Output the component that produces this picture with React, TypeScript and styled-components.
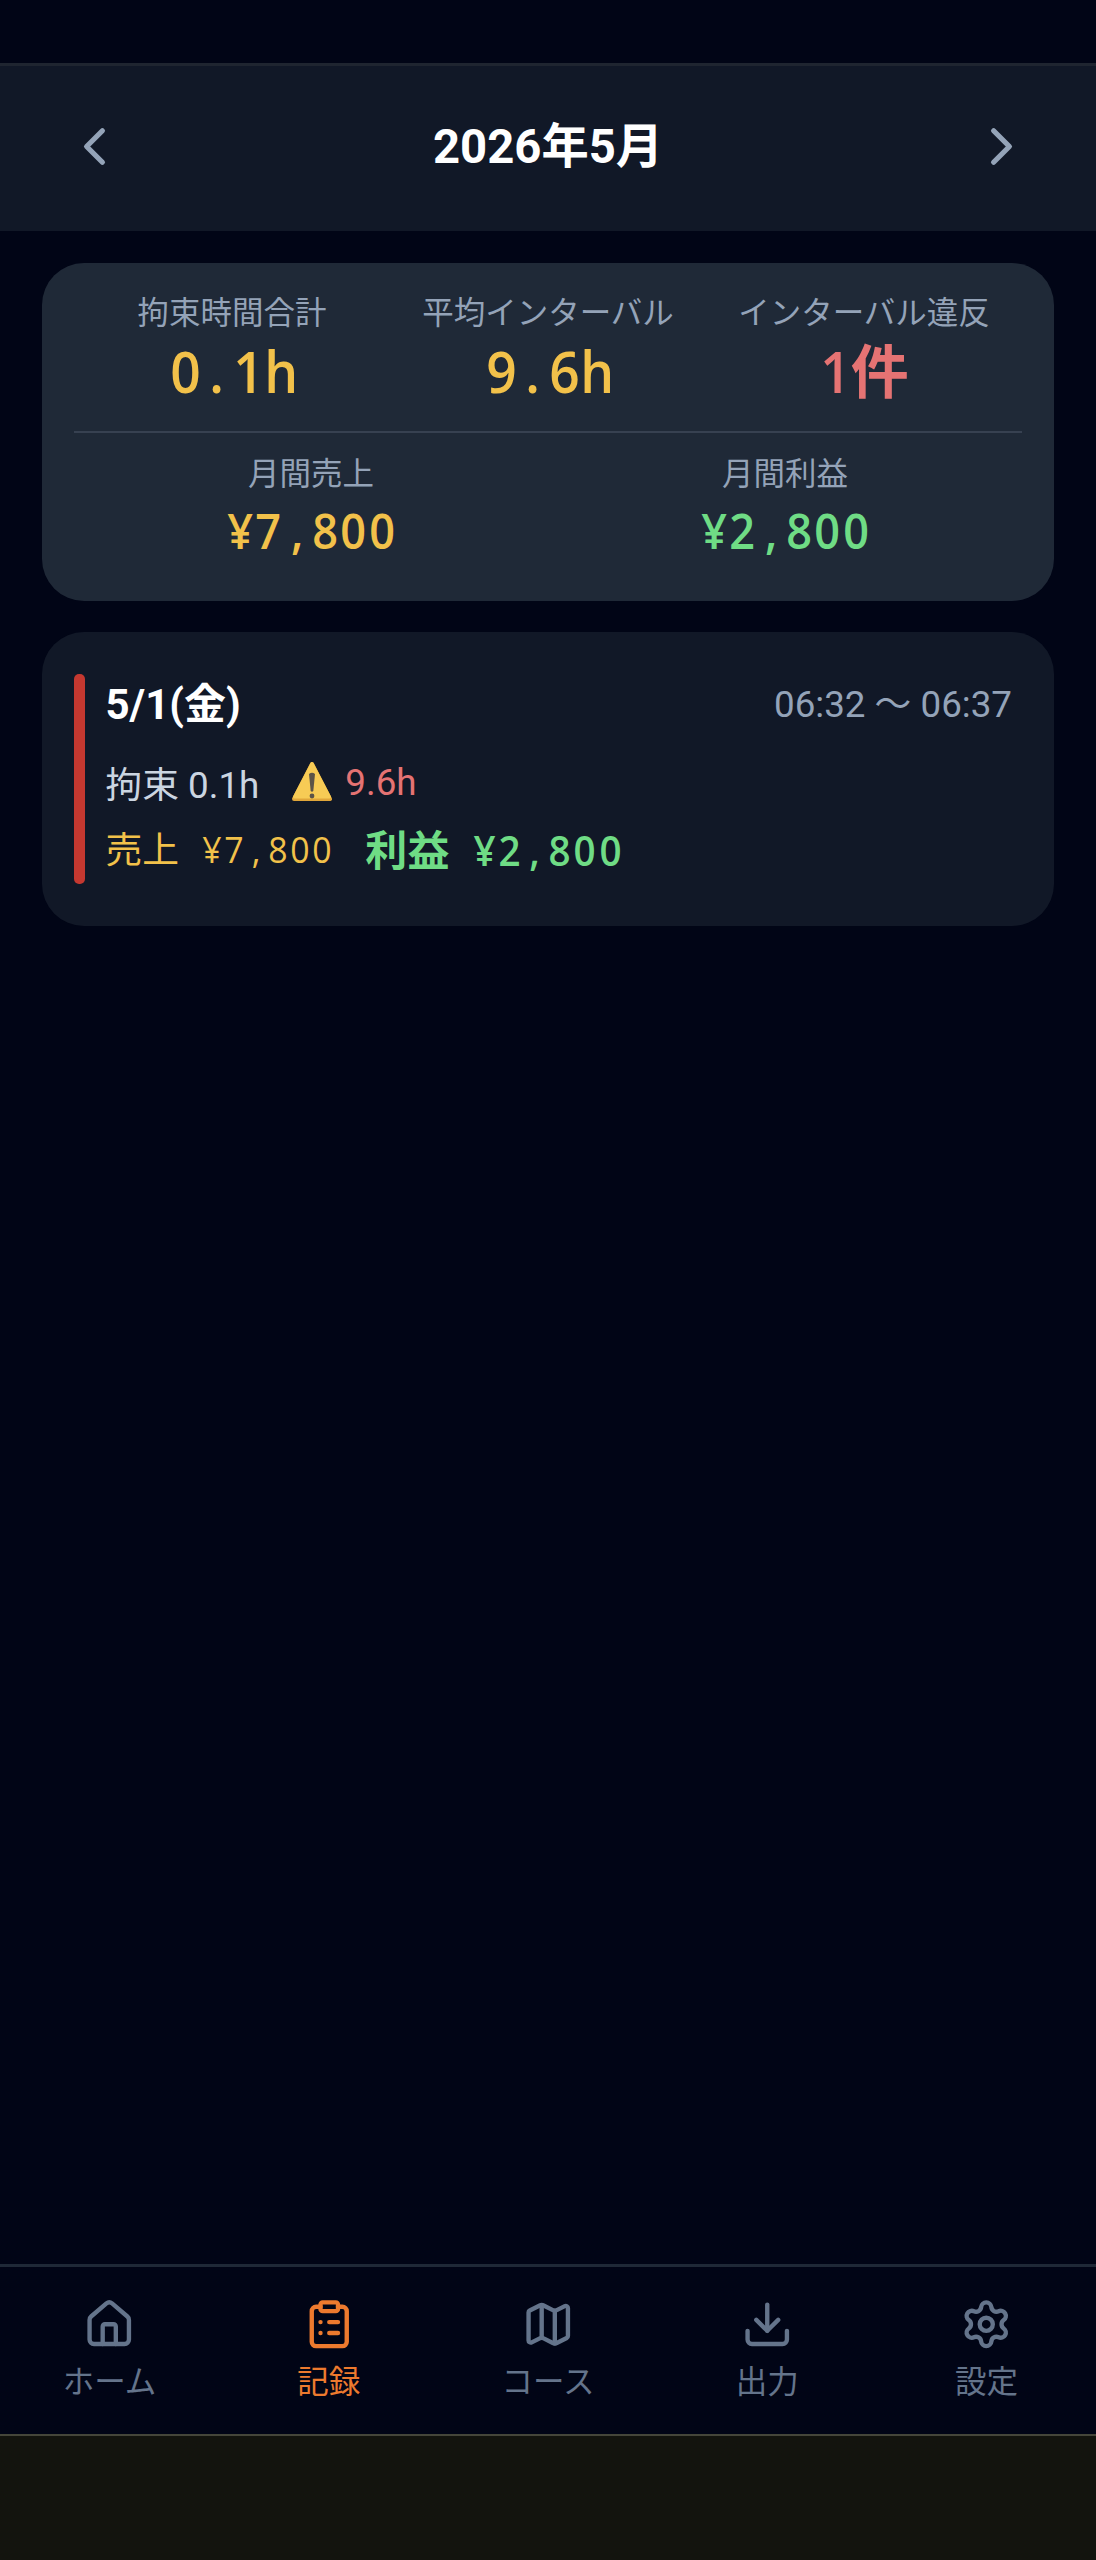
import React from "react";
import styled, { createGlobalStyle } from "styled-components";
import { ChevronLeft, ChevronRight, ClipboardList, Download, House, Map as MapIcon, Settings } from "lucide-react";

const GlobalStyle = createGlobalStyle`
	html, body {
		margin: 0;
		padding: 0;
		background: #010516;
	}
	body {
		font-family: Roboto, "Noto Sans CJK JP", sans-serif;
	}
`;

const Screen = styled.div`
	display: flex;
	flex-direction: column;
	width: 1096px;
	height: 2560px;
	background: #010516;
	overflow: hidden;
`;

const StatusSpace = styled.div`
	height: 63px;
	flex: none;
`;

const MonthHeader = styled.header`
	display: flex;
	align-items: center;
	justify-content: space-between;
	flex: none;
	box-sizing: border-box;
	height: 168px;
	padding: 0 63px 4px;
	background: #111827;
	border-top: 3px solid #1f2530;
`;

const MonthTitle = styled.h1`
	margin: 0;
	font-size: 47.25px;
	font-weight: 700;
	color: #ffffff;
	line-height: 60px;
`;

const NavArrow = styled.button`
	display: flex;
	padding: 0;
	border: 0;
	background: none;
	color: #94a3b8;
`;

const Content = styled.main`
	display: flex;
	flex-direction: column;
	gap: 31px;
	flex: 1;
	padding: 32px 42px 0;
`;

const SummaryCard = styled.section`
	box-sizing: border-box;
	height: 338px;
	padding: 30px 32px 0;
	border-radius: 42px;
	background: #1f2937;
`;

const StatRow = styled.div<{ $cols: number }>`
	display: grid;
	grid-template-columns: repeat(${(p) => p.$cols}, 1fr);
`;

const Stat = styled.div`
	display: flex;
	flex-direction: column;
	align-items: center;
	white-space: nowrap;
`;

const StatLabel = styled.span`
	font-size: 31.5px;
	line-height: 42px;
	color: #94a3b8;
`;

const StatValue = styled.span<{ $size: number; $line: number; $color: string }>`
	font-family: "Open Sans", "Noto Sans CJK JP", sans-serif;
	font-size: ${(p) => p.$size}px;
	font-weight: 600;
	line-height: ${(p) => p.$line}px;
	color: ${(p) => p.$color};
`;

const Divider = styled.hr`
	height: 2px;
	margin: 24px 0 21px;
	border: 0;
	background: #374151;
`;

const DayCard = styled.article`
	display: flex;
	gap: 21px;
	box-sizing: border-box;
	height: 294px;
	padding: 42px 42px 42px 32px;
	border-radius: 42px;
	background: #111827;
`;

const Accent = styled.div`
	width: 10.5px;
	flex: none;
	border-radius: 5px;
	background: #c53830;
`;

const DayBody = styled.div`
	display: flex;
	flex-direction: column;
	flex: 1;
`;

const DayTop = styled.div`
	display: flex;
	align-items: center;
	justify-content: space-between;
	height: 53px;
	margin-bottom: 30px;
`;

const DayDate = styled.span`
	font-size: 42px;
	font-weight: 700;
	color: #ffffff;
`;

const DayTime = styled.span`
	font-size: 36.75px;
	color: #94a3b8;
`;

const DayLine = styled.div`
	display: flex;
	align-items: center;
	height: 50px;
	margin-bottom: 15px;
	white-space: nowrap;
`;

const Duration = styled.span`
	font-size: 36.75px;
	color: #cbd5e1;
`;

const WarnWrap = styled.span`
	display: flex;
	margin-left: 32px;
	margin-right: 12px;
`;

const IntervalText = styled.span`
	font-size: 36.75px;
	color: #e57373;
`;

const Sales = styled.span`
	font-family: "Open Sans", "Noto Sans CJK JP", sans-serif;
	font-size: 36.75px;
	color: #f2c14a;
	margin-right: 32px;
`;

const Profit = styled.span`
	font-family: "Open Sans", "Noto Sans CJK JP", sans-serif;
	font-size: 42px;
	font-weight: 600;
	color: #6fdc85;
`;

const ProfitAmount = styled.span`
	margin-left: -3px;
`;

// squeezed a little: the figures in the reference are narrower than Open Sans
const Cell = styled.span<{ $width: number }>`
	display: inline-block;
	width: ${(p) => p.$width}em;
	text-align: center;
	transform: scaleX(0.92);
`;

const BottomNav = styled.nav`
	display: grid;
	grid-template-columns: repeat(5, 1fr);
	flex: none;
	box-sizing: border-box;
	height: 172px;
	padding-top: 31px;
	background: #010516;
	border-top: 3px solid #1f2937;
	border-bottom: 2px solid #45463a;
`;

const Tab = styled.a<{ $active?: boolean }>`
	display: flex;
	flex-direction: column;
	align-items: center;
	gap: 10px;
	font-size: 31.5px;
	line-height: 44px;
	color: ${(p) => (p.$active ? "#ed7a2e" : "#64748b")};
`;

const GestureArea = styled.div`
	flex: none;
	height: 124px;
	background: #13140e;
`;

// monospaced look for the figures: every latin char sits in a fixed cell
const Mono = ({ text, width = 0.6 }: { text: string; width?: number }) => (
	<>
		{Array.from(text).map((ch, i) =>
			ch.charCodeAt(0) < 256 ? (
				<Cell key={i} $width={width}>
					{ch === " " ? "\u00a0" : ch}
				</Cell>
			) : (
				<span key={i}>{ch}</span>
			)
		)}
	</>
);

const WarnIcon = () => (
	<svg width="42" height="42" viewBox="0 0 42 42">
		<path d="M21 3 L39 38 H3 Z" fill="#e0a63a" stroke="#e0a63a" strokeWidth="4" strokeLinejoin="round" />
		<path d="M21 2.5 L38.5 36 H3.5 Z" fill="#f7cb55" stroke="#f7cb55" strokeWidth="3" strokeLinejoin="round" />
		<path d="M18 13 Q21 10.5 24 13 L22.3 30 Q21 31.5 19.7 30 Z" fill="#5c5347" />
		<circle cx="21" cy="35" r="2.4" fill="#5c5347" />
	</svg>
);

const tabs = [
	{ label: "ホーム", icon: House },
	{ label: "記録", icon: ClipboardList, active: true },
	{ label: "コース", icon: MapIcon },
	{ label: "出力", icon: Download },
	{ label: "設定", icon: Settings },
];

const App = () => {
	return (
		<Screen>
			<GlobalStyle />
			<StatusSpace />
			<MonthHeader>
				<NavArrow>
					<ChevronLeft size={63} strokeWidth={2} />
				</NavArrow>
				<MonthTitle>2026年5月</MonthTitle>
				<NavArrow>
					<ChevronRight size={63} strokeWidth={2} />
				</NavArrow>
			</MonthHeader>
			<Content>
				<SummaryCard>
					<StatRow $cols={3}>
						<Stat>
							<StatLabel>拘束時間合計</StatLabel>
							<StatValue $size={58} $line={72} $color="#f2c14a">
								<Mono text="0.1h" width={0.54} />
							</StatValue>
						</Stat>
						<Stat>
							<StatLabel>平均インターバル</StatLabel>
							<StatValue $size={58} $line={72} $color="#f2c14a">
								<Mono text="9.6h" width={0.54} />
							</StatValue>
						</Stat>
						<Stat>
							<StatLabel>インターバル違反</StatLabel>
							<StatValue $size={58} $line={72} $color="#e57373">
								<Mono text="1件" width={0.54} />
							</StatValue>
						</Stat>
					</StatRow>
					<Divider />
					<StatRow $cols={2}>
						<Stat>
							<StatLabel>月間売上</StatLabel>
							<StatValue $size={49} $line={68} $color="#f2c14a">
								<Mono text="¥7,800" width={0.58} />
							</StatValue>
						</Stat>
						<Stat>
							<StatLabel>月間利益</StatLabel>
							<StatValue $size={49} $line={68} $color="#6fdc85">
								<Mono text="¥2,800" width={0.58} />
							</StatValue>
						</Stat>
					</StatRow>
				</SummaryCard>
				<DayCard>
					<Accent />
					<DayBody>
						<DayTop>
							<DayDate>5/1(金)</DayDate>
							<DayTime>06:32 〜 06:37</DayTime>
						</DayTop>
						<DayLine>
							<Duration>拘束 0.1h</Duration>
							<WarnWrap>
								<WarnIcon />
							</WarnWrap>
							<IntervalText>9.6h</IntervalText>
						</DayLine>
						<DayLine>
							<Sales>
								<Mono text="売上 ¥7,800" />
							</Sales>
							<Profit>
								<Mono text="利益 " />
								<ProfitAmount>
									<Mono text="¥2,800" />
								</ProfitAmount>
							</Profit>
						</DayLine>
					</DayBody>
				</DayCard>
			</Content>
			<BottomNav>
				{tabs.map((tab) => (
					<Tab key={tab.label} $active={tab.active}>
						<tab.icon size={52.5} strokeWidth={2} />
						{tab.label}
					</Tab>
				))}
			</BottomNav>
			<GestureArea />
		</Screen>
	);
};

export default App;
